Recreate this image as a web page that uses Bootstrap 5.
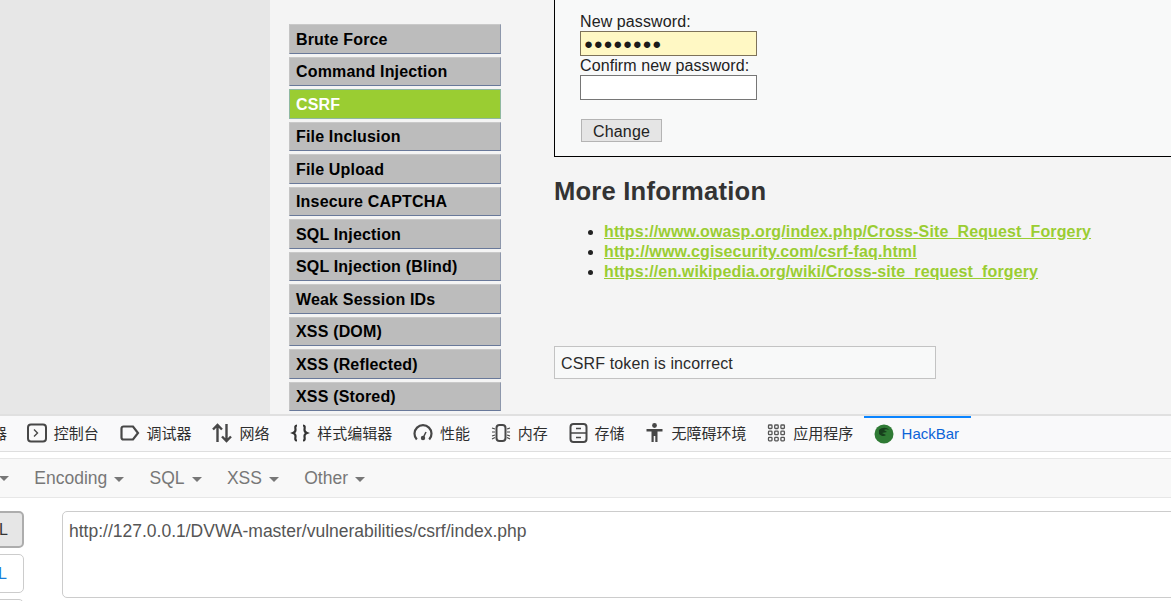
<!DOCTYPE html>
<html lang="zh-CN">
<head>
<meta charset="utf-8">
<title>DVWA CSRF</title>
<link href="https://cdn.jsdelivr.net/npm/bootstrap@5.3.0/dist/css/bootstrap.min.css" rel="stylesheet">
<style>
html,body{margin:0;height:601px;overflow:hidden;background:#fff}
body{font-family:"Liberation Sans",Arial,sans-serif;font-size:16px;color:#222}
.stage{height:414px;background:#f4f4f4;overflow:hidden}
.side-gray{width:270px;background:#e7e7e7;flex:none}
.menu-col{width:284px;flex:none;padding:24px 0 0 19px}
.menu-item{display:block;width:212px;height:29.5px;margin-bottom:3px;padding:.5px 0 0 6px;background:#bcbcbc;border:1px solid #bcbcbc;border-top-color:#c9c9c9;border-bottom-color:#69799a;border-right-color:#8d97ab;border-left-color:#c4c4c4;color:#000;font-weight:700;font-size:16px;letter-spacing:.17px;line-height:28px;text-decoration:none}
.menu-item.is-on{background:#9acd32;color:#fff;border-color:#8fb8a0}
.content-col{flex:1;min-width:0}
.form-box{height:157px;margin-right:-4px;background:#f8f9f9;border:1px solid #000;border-top:0;padding:13px 0 0 25px;line-height:18px;letter-spacing:.1px}
.form-box label{display:block;height:18px;color:#222}
.form-box label.lbl-second{height:19px;line-height:20px}
.pw{display:block;width:177px;height:25px;padding:0 3px;border:1px solid #767676;background:#fff;border-radius:0;font-size:13px;line-height:22px;outline:0}
.pw.filled{background:#fff8c4;border-color:#7d725a;color:#1a1a1a;font-size:15px;letter-spacing:.7px}
.change-btn{display:block;margin:19px 0 0 1px;width:81px;height:23px;padding:1px 0 0;background:#e5e5e5;border:1px solid #b4b4b4;font-size:16px;line-height:21px;color:#222;letter-spacing:.2px}
.more-h{font-size:25.6px;font-weight:700;color:#333;line-height:30px;margin:19px 0 0;letter-spacing:.2px}
.more-list{margin:16px 0 0;padding:0 0 0 50px;line-height:20px;list-style:disc}
.more-list a{color:#9acd32;font-weight:700;text-decoration:underline;letter-spacing:.13px}
.msg{width:382px;height:33px;margin-top:64px;padding:0 0 0 6px;background:#f8f9f9;border:1px solid #c3c3c3;line-height:33px;color:#2b2b2b;letter-spacing:.13px}
.tools{height:38px;background:#f9f9fa;border-top:2px solid #e0e0e0;border-bottom:1px solid #dedede;overflow:hidden;font-family:"Noto Sans CJK SC",sans-serif;font-size:15px;color:#2e2e2e;white-space:nowrap}
.tool-tab{height:33px;display:flex;align-items:center;gap:7px;padding:0 10.4px;flex:none;line-height:1}
.tool-tab svg{flex:none;display:block}
.tool-clip{margin-left:-38px;padding:0 9.4px 0 0;gap:0}
.tool-tab.is-on{height:35px;color:#0b63d8;font-family:"Liberation Sans",sans-serif;font-size:15px;box-shadow:inset 0 2px 0 #0a84ff;width:107px;gap:8px;padding:0 10px}
.gap-strip{height:6px;background:#fff}
.bar{height:40px;background:#f8f8f8;border-top:1px solid #e7e7e7;border-bottom:1px solid #e7e7e7;color:#777;font-size:17.5px;line-height:38px;overflow:hidden;white-space:nowrap}
.bar-item{flex:none;padding-right:25.3px}
.bar-clip{flex:none;width:9px;margin-right:25.3px;display:flex;align-items:center;overflow:visible}
.caret-d{display:inline-block;width:0;height:0;margin-left:7px;vertical-align:middle;border-top:5px solid #777;border-left:5px solid transparent;border-right:5px solid transparent}
.caret-clip{margin-left:-1px;flex:none}
.lower{height:103px;background:#fff;padding-top:13px;overflow:hidden}
.btn-col{width:74px;flex:none;margin-left:-12px;display:flex;flex-direction:column;align-items:flex-start;gap:6px}
.load-btn{width:36px;height:39px;flex:none;border:1px solid #ccc;border-radius:5px;background:#fff;color:#1a7fd9;font-size:16px;line-height:37px;text-align:right;padding:0 16px 0 0}
.load-btn.is-pressed{height:37px;background:#e6e6e6;border:2px solid #adadad;color:#333;line-height:34px;padding-right:14px}
.url-area{flex:none;width:1120px;height:87px;border:1px solid #ccc;border-radius:5px;padding:7px 6px;font-size:17.5px;line-height:24px;color:#555;background:#fff}
</style>
</head>
<body>
<div class="stage d-flex">
  <div class="side-gray"></div>
  <nav class="menu-col">
    <a class="menu-item" href="#">Brute Force</a>
    <a class="menu-item" href="#">Command Injection</a>
    <a class="menu-item is-on" href="#">CSRF</a>
    <a class="menu-item" href="#">File Inclusion</a>
    <a class="menu-item" href="#">File Upload</a>
    <a class="menu-item" href="#">Insecure CAPTCHA</a>
    <a class="menu-item" href="#">SQL Injection</a>
    <a class="menu-item" href="#">SQL Injection (Blind)</a>
    <a class="menu-item" href="#">Weak Session IDs</a>
    <a class="menu-item" href="#">XSS (DOM)</a>
    <a class="menu-item" href="#">XSS (Reflected)</a>
    <a class="menu-item" href="#">XSS (Stored)</a>
  </nav>
  <main class="content-col">
    <div class="form-box">
      <label for="pw1">New password:</label>
      <input id="pw1" class="pw filled" type="text" value="●●●●●●●●">
      <label class="lbl-second" for="pw2">Confirm new password:</label>
      <input id="pw2" class="pw" type="text">
      <button class="change-btn" type="button">Change</button>
    </div>
    <h2 class="more-h">More Information</h2>
    <ul class="more-list">
      <li><a href="#">https://www.owasp.org/index.php/Cross-Site_Request_Forgery</a></li>
      <li><a href="#">http://www.cgisecurity.com/csrf-faq.html</a></li>
      <li><a href="#">https://en.wikipedia.org/wiki/Cross-site_request_forgery</a></li>
    </ul>
    <div class="msg">CSRF token is incorrect</div>
  </main>
</div>
<div class="tools d-flex">
  <div class="tool-tab tool-clip"><span>查看器</span></div>
  <div class="tool-tab"><svg width="20" height="20" viewBox="0 0 20 20" fill="none" stroke="#474747" stroke-width="2"><rect x="1" y="1.5" width="18" height="17" rx="3"/><path d="M7 6.5l3.500 3.500L7 13.500" stroke-width="1.400"/></svg><span>控制台</span></div>
  <div class="tool-tab"><svg width="20" height="18" viewBox="0 0 20 18" fill="none" stroke="#474747" stroke-width="2.200"><path d="M3.500 2.500h9.500l5 6.500-5 6.500H3.500a2 2 0 0 1-2-2v-9a2 2 0 0 1 2-2z"/></svg><span>调试器</span></div>
  <div class="tool-tab"><svg width="20" height="20" viewBox="0 0 20 20" fill="none" stroke="#474747" stroke-width="2.400"><path d="M5.500 19V2M1 6.500L5.500 2 10 6.500M14.500 1v17M10 13.500l4.500 4.500 4.500-4.500"/></svg><span>网络</span></div>
  <div class="tool-tab"><svg width="20" height="20" viewBox="0 0 20 20" fill="none" stroke="#333" stroke-width="2.200"><path d="M7 2.500C4.500 2.500 5.500 5 5.500 7c0 2-2.500 3-2.500 3s2.500 1 2.500 3c0 2-1 4.500 1.500 4.500M13 2.500c2.500 0 1.500 2.500 1.500 4.500 0 2 2.500 3 2.500 3s-2.500 1-2.500 3c0 2 1 4.500-1.500 4.500"/></svg><span>样式编辑器</span></div>
  <div class="tool-tab"><svg width="20" height="20" viewBox="0 0 20 20" fill="none" stroke="#474747" stroke-width="2.200"><path d="M3.800 16.500A8.500 8.500 0 1 1 16.200 16.500"/><circle cx="10" cy="15" r="2.200" fill="#474747" stroke="none"/><path d="M10 15l3-6" stroke-width="1.600"/></svg><span>性能</span></div>
  <div class="tool-tab"><svg width="20" height="20" viewBox="0 0 20 20" fill="none" stroke="#474747" stroke-width="2"><rect x="5.500" y="2" width="9" height="16" rx="3"/><path d="M1 5l3 1M1 9h3M1 13l3-1M1 16l3-1.500M19 5l-3 1M19 9h-3M19 13l-3-1M19 16l-3-1.500" stroke-width="1.200"/></svg><span>内存</span></div>
  <div class="tool-tab"><svg width="19" height="20" viewBox="0 0 19 20" fill="none" stroke="#474747" stroke-width="2"><rect x="1.500" y="1" width="16" height="18" rx="3"/><path d="M1.500 10h16M7 5.500h5M7 14.500h5" stroke-width="1.600"/></svg><span>存储</span></div>
  <div class="tool-tab"><svg width="19" height="20" viewBox="0 0 19 20" fill="#474747"><circle cx="9.500" cy="2.500" r="2.400"/><path d="M1.500 6h16v2.400h-5V19H10.300v-6H8.700v6H6.500V8.400H1.500z"/></svg><span>无障碍环境</span></div>
  <div class="tool-tab"><svg width="19" height="18" viewBox="0 0 18 18" fill="none" stroke="#565656" stroke-width="1.300"><rect x="1" y="1" width="3.500" height="3.500" rx=".8"/><rect x="7.200" y="1" width="3.500" height="3.500" rx=".8"/><rect x="13.400" y="1" width="3.500" height="3.500" rx=".8"/><rect x="1" y="7.200" width="3.500" height="3.500" rx=".8"/><rect x="7.200" y="7.200" width="3.500" height="3.500" rx=".8"/><rect x="13.400" y="7.200" width="3.500" height="3.500" rx=".8"/><rect x="1" y="13.400" width="3.500" height="3.500" rx=".8"/><rect x="7.200" y="13.400" width="3.500" height="3.500" rx=".8"/><rect x="13.400" y="13.400" width="3.500" height="3.500" rx=".8"/></svg><span>应用程序</span></div>
  <div class="tool-tab is-on"><svg width="20" height="20" viewBox="0 0 20 20"><circle cx="10" cy="10" r="9.500" fill="#2f7a34"/><path d="M5 6c3-3 8-3 10 0-2-1-4-1-5 0l3 2-5 1 4 2c-2 2-5 1-7-1z" fill="#173f1c"/></svg><span>HackBar</span></div>
</div>
<div class="gap-strip"></div>
<div class="bar d-flex">
  <div class="bar-clip"><span class="caret-d caret-clip"></span></div>
  <div class="bar-item">Encoding<span class="caret-d"></span></div>
  <div class="bar-item">SQL<span class="caret-d"></span></div>
  <div class="bar-item">XSS<span class="caret-d"></span></div>
  <div class="bar-item">Other<span class="caret-d"></span></div>
</div>
<div class="lower d-flex">
  <div class="btn-col">
    <div class="load-btn is-pressed">L</div>
    <div class="load-btn">L</div>
    <div class="load-btn">L</div>
  </div>
  <div class="url-area">http://127.0.0.1/DVWA-master/vulnerabilities/csrf/index.php</div>
</div>
<script src="https://cdn.jsdelivr.net/npm/bootstrap@5.3.0/dist/js/bootstrap.bundle.min.js"></script>
</body>
</html>
